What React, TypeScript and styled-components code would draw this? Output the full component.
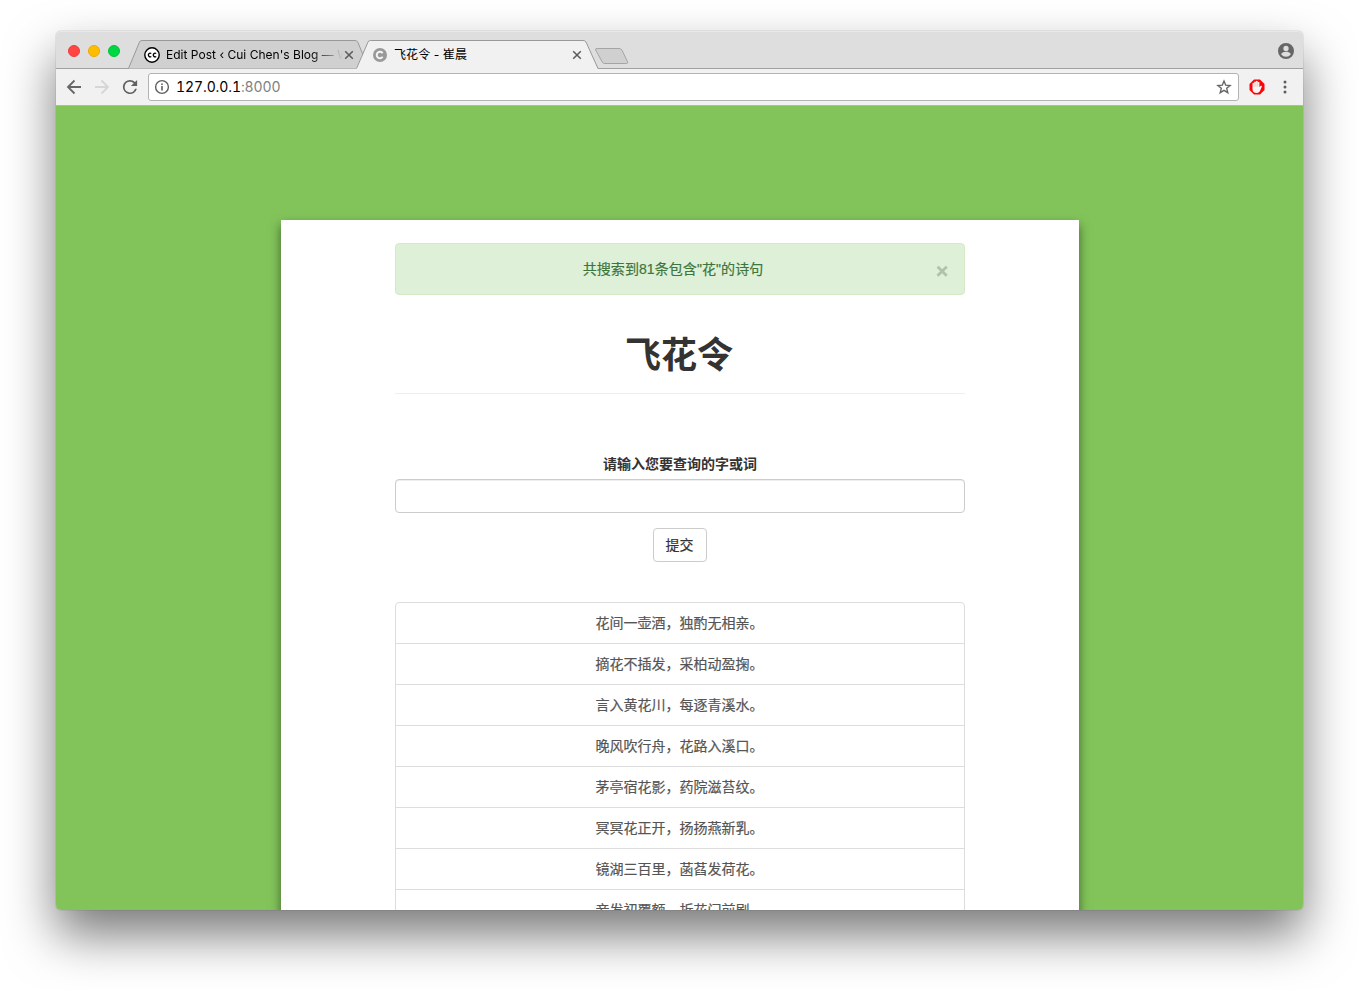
import React from "react";
import styled, { createGlobalStyle } from "styled-components";

const GlobalStyle = createGlobalStyle`
  * { box-sizing: border-box; }
  html, body { margin: 0; padding: 0; background: #fff; }
  body { overflow: hidden; }
`;

const uiFont = `Inter, "Noto Sans CJK SC", sans-serif`;
const pageFont = `"Liberation Sans", "Noto Sans CJK SC", sans-serif`;

const Desktop = styled.div`
  width: 1359px;
  height: 990px;
  padding: 31px 0 0 56px;
  overflow: hidden;
  background: #fff;
`;

const BrowserWindow = styled.div`
  display: flex;
  flex-direction: column;
  width: 1247px;
  height: 879px;
  border-radius: 5px;
  box-shadow: 0 0 1px rgba(0, 0, 0, 0.6), 0 25px 50px rgba(0, 0, 0, 0.53);
`;

const TabStrip = styled.header`
  display: flex;
  flex: none;
  height: 38px;
  padding-left: 12px;
  border-bottom: 1px solid #a0a0a0;
  border-radius: 5px 5px 0 0;
  background: #dedede;
  box-shadow: inset 0 1px #e8e8e8;
`;

const TrafficLights = styled.div`
  display: flex;
  gap: 8px;
  width: 60px;
  padding-top: 14px;
`;

const Light = styled.span<{ $color: string; $ring: string }>`
  width: 12px;
  height: 12px;
  border-radius: 50%;
  border: 1px solid ${(p) => p.$ring};
  background: ${(p) => p.$color};
`;

const Tab = styled.div<{ $width: number; $active?: boolean }>`
  position: relative;
  display: flex;
  align-items: center;
  flex: none;
  width: ${(p) => p.$width}px;
  height: 29px;
  margin-top: 9px;
  margin-left: ${(p) => (p.$active ? -13 : 0)}px;
  padding: 1px ${(p) => (p.$active ? 17 : 15)}px 0 16px;
  z-index: ${(p) => (p.$active ? 2 : 1)};
`;

const TabShape = styled.svg`
  position: absolute;
  inset: 0;
  z-index: -1;
`;

const TabTitle = styled.span<{ $fade?: boolean }>`
  flex: 1;
  min-width: 0;
  margin-left: 6px;
  overflow: hidden;
  white-space: pre;
  font: 12px/18px ${uiFont};
  letter-spacing: ${(p) => (p.$fade ? "0.02px" : "0.1px")};
  color: #000;
  ${(p) => p.$fade && "mask-image: linear-gradient(90deg, #000 145px, transparent 177px);"}
`;

const NewTab = styled.svg`
  flex: none;
  margin: 16px 0 0 -4px;
`;

const ProfileIcon = styled.svg`
  margin: 12px 9px 0 auto;
`;

const Toolbar = styled.nav`
  display: flex;
  align-items: center;
  flex: none;
  height: 37px;
  border-bottom: 1px solid #b5b5b5;
  background: #f1f1f1;
  padding: 0 10px;
`;

const NavButtons = styled.div`
  display: flex;
  gap: 12px;
  margin-right: 10px;
`;

const AddressBar = styled.div`
  display: flex;
  align-items: center;
  flex: none;
  width: 1091px;
  height: 28px;
  padding: 0 6px 0 5px;
  border: 1px solid #b3b3b3;
  border-radius: 3px;
  background: #fff;
`;

const Address = styled.span`
  flex: 1;
  margin-left: 6px;
  font: 14px/20px ${uiFont};
  font-variant-numeric: tabular-nums;
  letter-spacing: -0.09px;
  color: #000;
`;

const Port = styled.span`
  color: #808080;
`;

const Extensions = styled.div`
  display: flex;
  align-items: center;
  gap: 12px;
  margin-left: 10px;
`;

const Viewport = styled.main`
  flex: 1;
  min-height: 0;
  padding-top: 114px;
  overflow: hidden;
  border-radius: 0 0 5px 5px;
  background: #82c45a;
`;

const Sheet = styled.section`
  width: 798px;
  height: 900px;
  margin: 0 0 0 225px;
  padding: 23px 114px;
  background: #fff;
  box-shadow: 0 5px 10px rgba(0, 0, 0, 0.5);
  font: 14px/20px ${pageFont};
  color: #333;
  text-align: center;
`;

const Alert = styled.div`
  display: flex;
  height: 52px;
  padding: 15px 16px 0 15px;
  border: 1px solid #d6e9c6;
  border-radius: 4px;
  background: #dff0d8;
  color: #3c763d;
`;

const AlertText = styled.span`
  flex: 1;
  margin-left: -1px;
  letter-spacing: 0.08px;
  -webkit-text-stroke: 0.2px currentColor;
`;

const CloseButton = styled.button`
  width: 12px;
  height: 21px;
  margin-top: 1px;
  padding: 0;
  border: 0;
  background: none;
  color: #000;
  opacity: 0.2;
  font: bold 21px/21px ${pageFont};
  -webkit-text-stroke: 0.5px #000;
`;

const Heading = styled.header`
  height: 99px;
  padding-top: 41px;
  border-bottom: 1px solid #eee;
`;

const Title = styled.h1`
  margin: 0 1px 0 -1px;
  font: 700 36px/40px ${pageFont};
`;

const Form = styled.form`
  display: flex;
  flex-direction: column;
  align-items: center;
  margin-top: 60px;
`;

const Label = styled.label`
  height: 25px;
  font-weight: 700;
`;

const Input = styled.input`
  width: 100%;
  height: 34px;
  border: 1px solid #ccc;
  border-radius: 4px;
  background: #fff;
  box-shadow: inset 0 1px 1px rgba(0, 0, 0, 0.075);
`;

const Submit = styled.button`
  width: 54px;
  height: 34px;
  margin-top: 15px;
  padding: 0 1px 0 0;
  border: 1px solid #ccc;
  border-radius: 4px;
  background: #fff;
  color: #333;
  font: 14px/20px ${pageFont};
  -webkit-text-stroke: 0.2px currentColor;
`;

const Verses = styled.ul`
  margin: 40px 0 0;
  padding: 0;
  list-style: none;
  border: 1px solid #ddd;
  border-radius: 4px;
`;

const Verse = styled.li`
  height: 41px;
  padding: 10px 1px 0 0;
  border-bottom: 1px solid #ddd;
  color: #555;
  -webkit-text-stroke: 0.2px currentColor;
`;

const verses = [
  "花间一壶酒，独酌无相亲。",
  "摘花不插发，采柏动盈掬。",
  "言入黄花川，每逐青溪水。",
  "晚风吹行舟，花路入溪口。",
  "茅亭宿花影，药院滋苔纹。",
  "冥冥花正开，扬扬燕新乳。",
  "镜湖三百里，菡萏发荷花。",
  "妾发初覆额，折花门前剧。",
];

const TabClose = () => (
  <svg width="10" height="10" viewBox="0 0 10 10" stroke="#5a5a5a" strokeWidth="1.5">
    <path d="M1.2 1.2 8.8 8.8M8.8 1.2 1.2 8.8" />
  </svg>
);

export default function App() {
  return (
    <Desktop>
      <GlobalStyle />
      <BrowserWindow>
        <TabStrip>
          <TrafficLights>
            <Light $color="#ff4642" $ring="#ee3b3c" />
            <Light $color="#ffbd00" $ring="#eda900" />
            <Light $color="#00d742" $ring="#00c43a" />
          </TrafficLights>
          <Tab $width={241}>
            <TabShape width="241" height="29" fill="#d0d0d0" stroke="#999">
              <path d="M.5 28.5 11.5 2Q12 .5 14 .5H227Q229 .5 230 2.5L240.500 28.500" />
            </TabShape>
            <svg width="16" height="16" viewBox="0 0 16 16" fill="none" stroke="#000">
              <circle cx="8" cy="8" r="7.2" fill="#fff" strokeWidth="1.4" />
              <path d="M7.300 6.600a1.800 1.800 0 1 0 0 2.800M12.200 6.600a1.800 1.800 0 1 0 0 2.800" strokeWidth="1.300" />
            </svg>
            <TabTitle $fade>Edit Post ‹ Cui Chen's Blog — W</TabTitle>
            <TabClose />
          </Tab>
          <Tab $width={243} $active>
            <TabShape width="243" height="30" fill="#f1f1f1">
              <path d="M0 29 12 2Q12.500 .5 14.500 .5H227Q229 .5 230 2L242 29Z" />
              <path d="M.5 28.500 12 2Q12.500 .5 14.500 .5H227Q229 .5 230 2L242 28.500" fill="none" stroke="#999" />
            </TabShape>
            <svg width="16" height="16" viewBox="0 0 16 16" fill="none">
              <circle cx="8" cy="8" r="7" fill="#999" />
              <path d="M10.600 6.200a3.200 3.200 0 1 0 0 3.600" stroke="#f4f4f4" strokeWidth="2" />
            </svg>
            <TabTitle>飞花令 - 崔晨</TabTitle>
            <TabClose />
          </Tab>
          <NewTab width="34" height="18" fill="#d0d0d0" stroke="#a5a5a5">
            <path d="M2 1.500H24Q26 1.500 27 3.200L32.600 15Q33.200 16.500 31.500 16.500H10Q8 16.500 7.200 15L.7 3Q0 1.500 2 1.500Z" />
          </NewTab>
          <ProfileIcon width="16" height="16" viewBox="2 2 20 20" fill="#666">
            <path d="M12 2a10 10 0 1 0 0 20 10 10 0 0 0 0-20Zm0 3.500a3.300 3.300 0 1 1 0 6.600 3.300 3.300 0 0 1 0-6.600Zm0 13.700a7.200 7.200 0 0 1-6-3.200c0-2 4-3.100 6-3.100s6 1.100 6 3.100a7.200 7.200 0 0 1-6 3.200Z" />
          </ProfileIcon>
        </TabStrip>
        <Toolbar>
          <NavButtons>
            <svg width="16" height="16" viewBox="0 0 16 16" fill="none" stroke="#666" strokeWidth="1.800">
              <path d="M15 8H2.500M8.500 1.500 2 8l6.500 6.500" />
            </svg>
            <svg width="16" height="16" viewBox="0 0 16 16" fill="none" stroke="#d6d6d6" strokeWidth="1.800">
              <path d="M1 8h12.500M7.500 1.500 14 8l-6.500 6.500" />
            </svg>
            <svg width="16" height="16" viewBox="3 3 18 18" fill="#606060">
              <path d="M17.650 6.350A7.960 7.960 0 0 0 12 4a8 8 0 1 0 7.730 10h-2.080A6 6 0 1 1 12 6c1.660 0 3.140.69 4.220 1.780L13 11h7V4l-2.350 2.350Z" />
            </svg>
          </NavButtons>
          <AddressBar>
            <svg width="16" height="16" viewBox="0 0 16 16" fill="none" stroke="#5e5e5e">
              <circle cx="8" cy="8" r="6.400" strokeWidth="1.400" />
              <path d="M8 7v4.500M8 4.400V6" strokeWidth="1.600" />
            </svg>
            <Address>
              127.0.0.1<Port>:8000</Port>
            </Address>
            <svg width="16" height="16" viewBox="0 0 16 16" fill="none" stroke="#666" strokeWidth="1.400">
              <path d="m8 2 1.700 4.200 4.400.3-3.400 2.800 1.100 4.400L8 11.300l-3.800 2.400 1.100-4.400-3.400-2.800 4.400-.3Z" />
            </svg>
          </AddressBar>
          <Extensions>
            <svg width="16" height="16" viewBox="0 0 16 16">
              <path d="M5 .5h6L15.500 5v6L11 15.500H5L.5 11V5Z" fill="#fb0606" />
              <path d="M3.500 7.500V4.300q.9-1 1.700 0V3q.9-1 1.700 0v-.7q.9-1 1.800 0V3.200q.9-1 1.700 0V8l1.500-1.300q1.400-.3 1 .8L11 12q-1 1.900-3.200 1.900-4.300 0-4.300-4Z" fill="#f5f5f5" />
              <path d="M5.200 4.500V8M6.900 3.500v4.300M8.700 3.500v4.300" stroke="#fb8c8c" strokeWidth=".4" />
            </svg>
            <svg width="16" height="16" viewBox="0 0 16 16" fill="#5e5e5e">
              <circle cx="8" cy="3" r="1.500" />
              <circle cx="8" cy="8" r="1.500" />
              <circle cx="8" cy="13" r="1.500" />
            </svg>
          </Extensions>
        </Toolbar>
        <Viewport>
          <Sheet>
            <Alert>
              <AlertText>共搜索到81条包含"花"的诗句</AlertText>
              <CloseButton>×</CloseButton>
            </Alert>
            <Heading>
              <Title>飞花令</Title>
            </Heading>
            <Form>
              <Label htmlFor="keyword">请输入您要查询的字或词</Label>
              <Input id="keyword" />
              <Submit type="button">提交</Submit>
            </Form>
            <Verses>
              {verses.map((verse) => (
                <Verse key={verse}>{verse}</Verse>
              ))}
            </Verses>
          </Sheet>
        </Viewport>
      </BrowserWindow>
    </Desktop>
  );
}
